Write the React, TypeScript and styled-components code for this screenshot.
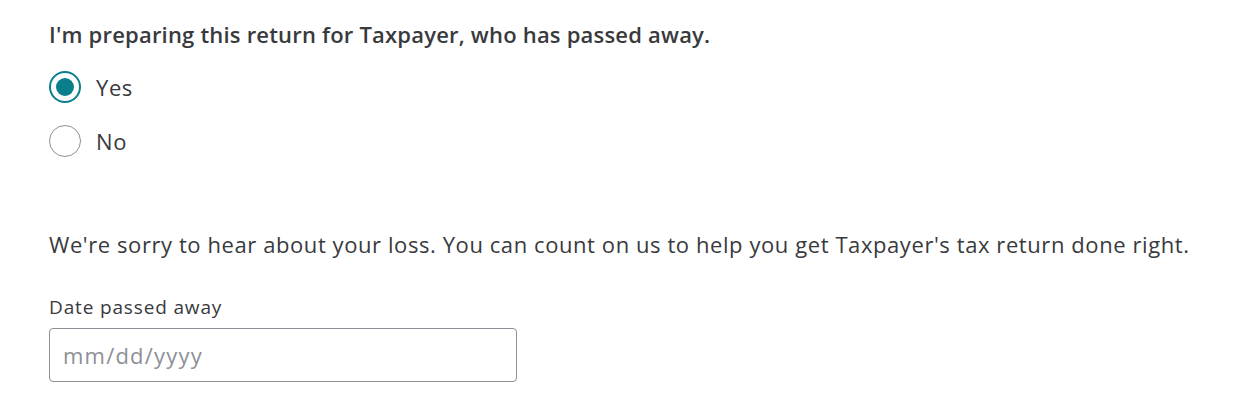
import React, { FC, useState } from 'react'
import styled, { createGlobalStyle } from 'styled-components'

const GlobalStyle = createGlobalStyle`
  body {
    margin: 0;
    background: #ffffff;
    font-family: 'Open Sans', 'Noto Sans', sans-serif;
    color: #393a3d;
  }
`

const App: FC = () => {
  const [answer, setAnswer] = useState<'yes' | 'no'>('yes')

  return (
    <Main>
      <GlobalStyle />
      <Question>I'm preparing this return for Taxpayer, who has passed away.</Question>
      <RadioGroup>
        <RadioRow onClick={() => setAnswer('yes')}>
          <RadioCircle checked={answer === 'yes'} />
          <RadioLabel>Yes</RadioLabel>
        </RadioRow>
        <RadioRow onClick={() => setAnswer('no')}>
          <RadioCircle checked={answer === 'no'} />
          <RadioLabel>No</RadioLabel>
        </RadioRow>
      </RadioGroup>
      <Message>
        We're sorry to hear about your loss. You can count on us to help you get Taxpayer's tax
        return done right.
      </Message>
      <Field>
        <FieldLabel>Date passed away</FieldLabel>
        <DateInput placeholder="mm/dd/yyyy" />
      </Field>
    </Main>
  )
}

export default App

const Main = styled.div`
  padding: 20px 49px 0;
  width: 100%;
  box-sizing: border-box;
`

const Question = styled.h2`
  margin: 0;
  font-size: 22px;
  line-height: 28px;
  font-weight: 600;
  letter-spacing: 0.2px;
  color: #393a3d;
`

const RadioGroup = styled.div`
  display: flex;
  flex-direction: column;
  gap: 22px;
  margin-top: 23px;
`

const RadioRow = styled.label`
  display: flex;
  align-items: center;
  gap: 15px;
  cursor: pointer;
`

const RadioCircle = styled.span<{ checked: boolean }>`
  width: 32px;
  height: 32px;
  border-radius: 50%;
  box-sizing: border-box;
  border: ${(p) => (p.checked ? '2px solid #0a7f8c' : '1px solid #8d9096')};
  display: flex;
  align-items: center;
  justify-content: center;
  &::after {
    content: '';
    width: 18px;
    height: 18px;
    border-radius: 50%;
    background: #0a7f8c;
    display: ${(p) => (p.checked ? 'block' : 'none')};
  }
`

const RadioLabel = styled.span`
  font-size: 22px;
  letter-spacing: 0.6px;
  color: #393a3d;
`

const Message = styled.p`
  margin: 73px 0 0;
  font-size: 22px;
  line-height: 28px;
  letter-spacing: 0.58px;
  color: #393a3d;
`

const Field = styled.div`
  margin-top: 37px;
  display: flex;
  flex-direction: column;
  gap: 9px;
`

const FieldLabel = styled.label`
  font-size: 19px;
  line-height: 24px;
  letter-spacing: 0.85px;
  color: #393a3d;
`

const DateInput = styled.input`
  width: 468px;
  height: 54px;
  box-sizing: border-box;
  border: 1px solid #8d9096;
  border-radius: 4px;
  padding: 0 13px;
  font-family: inherit;
  font-size: 22px;
  letter-spacing: 1.2px;
  color: #393a3d;
  outline: none;
  &::placeholder {
    color: #8d9096;
  }
`
